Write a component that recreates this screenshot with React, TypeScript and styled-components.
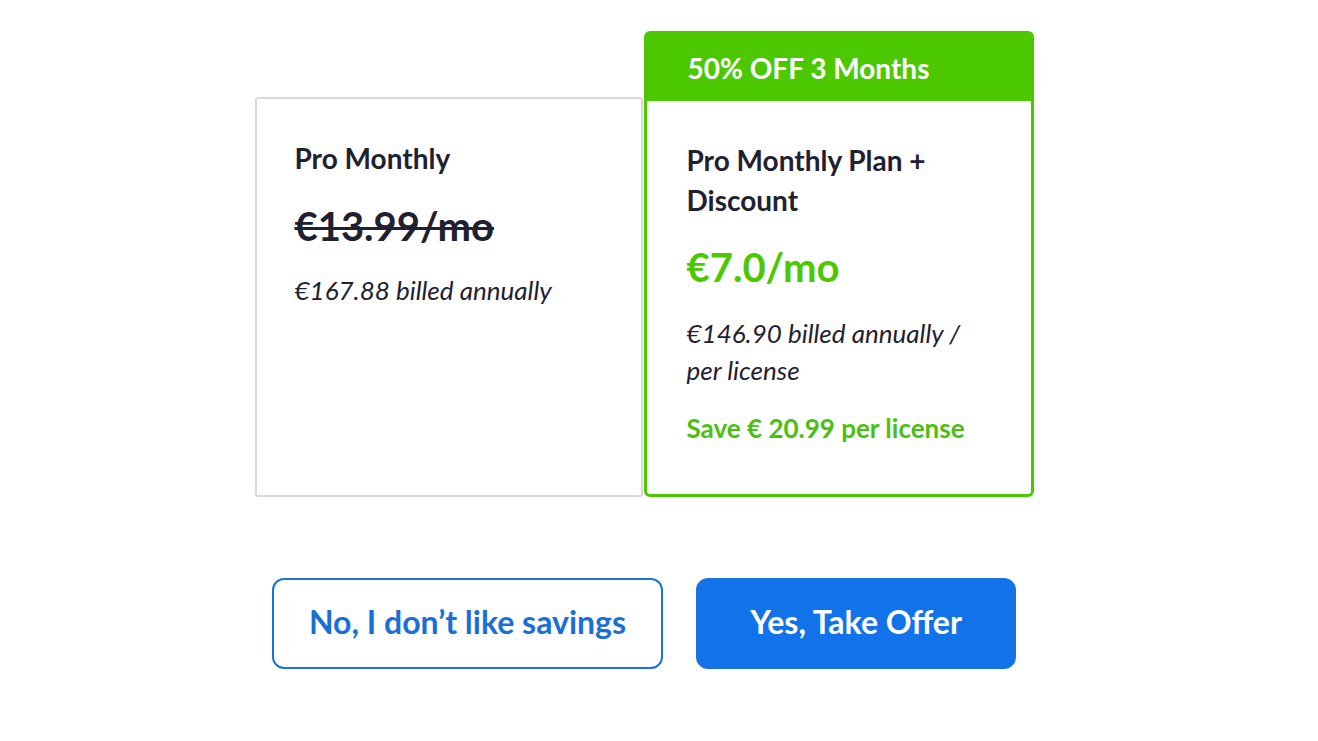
import React from "react";
import styled, { createGlobalStyle } from "styled-components";

const GlobalStyle = createGlobalStyle`
  html, body { margin: 0; padding: 0; background: #ffffff; }
  body { font-family: Lato, "Open Sans", Arial, sans-serif; color: #1f2131; }
`;

const Page = styled.div`
  display: flex;
  flex-direction: column;
  align-items: center;
  padding: 31px 30px 0 0;
  min-height: 741px;
  box-sizing: border-box;
`;

const Cards = styled.div`
  display: flex;
  align-items: flex-end;
`;

const PlainCard = styled.div`
  width: 388px;
  height: 400px;
  box-sizing: border-box;
  border: 2px solid #d9d9d9;
  border-radius: 3px;
  padding: 39px 38px;
  margin-right: 1px;
`;

const OfferCard = styled.div`
  width: 390px;
  display: flex;
  flex-direction: column;
`;

const Ribbon = styled.div`
  height: 70px;
  box-sizing: border-box;
  background: #4cc800;
  border-radius: 6px 6px 0 0;
  color: #ffffff;
  font-weight: 700;
  font-size: 28px;
  display: flex;
  align-items: center;
  padding: 3px 0 0 44px;
`;

const OfferBody = styled.div`
  height: 396px;
  box-sizing: border-box;
  border: 3px solid #4cc800;
  border-top: none;
  border-radius: 0 0 6px 6px;
  padding: 39px 40px;
`;

const Title = styled.div`
  font-weight: 700;
  font-size: 28px;
  line-height: 40px;
`;

const Price = styled.div<{ $old?: boolean }>`
  font-weight: 700;
  font-size: 40px;
  line-height: 44px;
  color: ${(p) => (p.$old ? "#1f2131" : "#4cc800")};
  text-decoration: ${(p) => (p.$old ? "line-through" : "none")};
  text-decoration-thickness: 3px;
  margin-top: ${(p) => (p.$old ? "26px" : "25px")};
`;

const Billed = styled.div<{ $gap?: number }>`
  font-style: italic;
  font-size: 26px;
  line-height: 37px;
  margin-top: ${(p) => p.$gap ?? 26}px;
`;

const Save = styled.div`
  color: #4cbf12;
  font-weight: 700;
  font-size: 26px;
  line-height: 37px;
  margin-top: 21px;
`;

const Buttons = styled.div`
  display: flex;
  gap: 33px;
  margin-top: 81px;
`;

const Button = styled.button<{ $primary?: boolean }>`
  height: 91px;
  width: ${(p) => (p.$primary ? "320px" : "391px")};
  box-sizing: border-box;
  border-radius: 12px;
  border: 2px solid #1a73e0;
  background: ${(p) => (p.$primary ? "#1272ea" : "#ffffff")};
  color: ${(p) => (p.$primary ? "#ffffff" : "#1a6fd6")};
  font-family: Lato, "Open Sans", Arial, sans-serif;
  font-weight: 700;
  font-size: 32px;
  cursor: pointer;
  padding: 0 0 4px;
`;

export default function App() {
  return (
    <>
      <GlobalStyle />
      <Page>
        <Cards>
          <PlainCard>
            <Title>Pro Monthly</Title>
            <Price $old>€13.99/mo</Price>
            <Billed $gap={24}>€167.88 billed annually</Billed>
          </PlainCard>
          <OfferCard>
            <Ribbon>50% OFF 3 Months</Ribbon>
            <OfferBody>
              <Title>
                Pro Monthly Plan +<br />
                Discount
              </Title>
              <Price>€7.0/mo</Price>
              <Billed>
                €146.90 billed annually /<br />
                per license
              </Billed>
              <Save>Save € 20.99 per license</Save>
            </OfferBody>
          </OfferCard>
        </Cards>
        <Buttons>
          <Button>No, I don’t like savings</Button>
          <Button $primary>Yes, Take Offer</Button>
        </Buttons>
      </Page>
    </>
  );
}
